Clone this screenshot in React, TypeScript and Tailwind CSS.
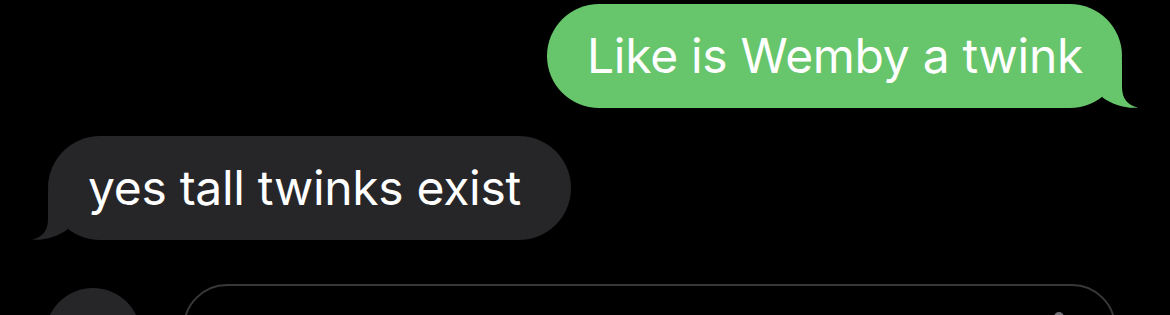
import React from "react";

function Tail({ color, flip }: { color: string; flip?: boolean }) {
  return (
    <svg
      width="40"
      height="50"
      viewBox="0 0 40 50"
      className={
        flip
          ? "absolute bottom-0 -left-[18px] -scale-x-100"
          : "absolute bottom-0 -right-[18px]"
      }
    >
      <path d="M22 0 L22 29 Q22 46 38 49.5 C28 51 12 47 2 39 Z" fill={color} />
    </svg>
  );
}

function Bubble({ text, mine }: { text: string; mine?: boolean }) {
  const color = mine ? "#67c56b" : "#262628";
  return (
    <div
      className={
        mine
          ? "relative flex h-[104px] items-center rounded-full bg-[#67c56b] pl-[40px] pr-[39px]"
          : "relative flex h-[104px] items-center rounded-full bg-[#262628] pl-[40px] pr-[50px]"
      }
    >
      <Tail color={color} flip={!mine} />
      <span className="relative text-[48px] leading-none tracking-[-0.3px] text-white">{text}</span>
    </div>
  );
}

export default function App() {
  return (
    <div className="h-[315px] w-[1170px] overflow-hidden bg-black px-12 pt-1 font-['Inter',sans-serif]">
      <div className="flex justify-end">
        <Bubble text="Like is Wemby a twink" mine />
      </div>
      <div className="mt-[28px] flex">
        <Bubble text="yes tall twinks exist" />
      </div>

      {/* compose bar */}
      <div className="mt-[44px] flex items-start gap-[42px] pr-[6px]">
        <div className="ml-[-3px] mt-1 h-[96px] w-[96px] shrink-0 rounded-full bg-[#262628]" />
        <div className="flex h-[100px] flex-1 items-start justify-end rounded-[44px] border-2 border-[#38383a] pr-[43px]">
          <svg width="24" height="40" viewBox="0 0 24 40" className="mt-[26px]">
            <rect x="7" y="0" width="10" height="22" rx="5" fill="#6e6e73" />
          </svg>
        </div>
      </div>
    </div>
  );
}
